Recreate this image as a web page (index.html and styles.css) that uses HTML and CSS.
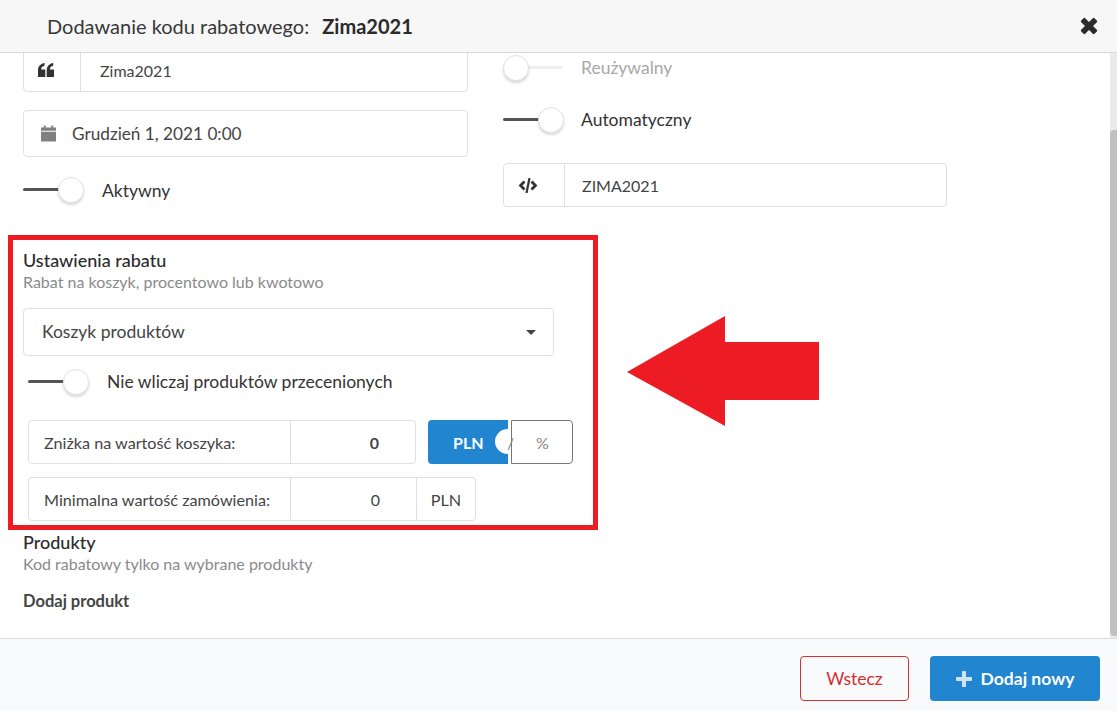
FILE: index.html
```html
<!DOCTYPE html>
<html lang="pl">
<head>
<meta charset="utf-8">
<title>Dodawanie kodu rabatowego</title>
<link rel="stylesheet" href="styles.css">
</head>
<body>
<div class="modal">
  <header class="head">
    <div class="title">Dodawanie kodu rabatowego: <b>Zima2021</b></div>
    <svg class="close" viewBox="0 0 18 18"><path d="M5.200 1.200 9 5l3.800-3.800a1.200 1.200 0 0 1 1.700 0l2.300 2.300a1.200 1.200 0 0 1 0 1.700L13 9l3.800 3.800a1.200 1.200 0 0 1 0 1.700l-2.300 2.300a1.200 1.200 0 0 1-1.700 0L9 13l-3.800 3.800a1.200 1.200 0 0 1-1.700 0l-2.300-2.300a1.200 1.200 0 0 1 0-1.700L5 9 1.200 5.200a1.200 1.200 0 0 1 0-1.700l2.300-2.300a1.200 1.200 0 0 1 1.700 0z"/></svg>
  </header>
  <main class="body">
    <div class="scroll">
      <div class="cols">
        <div class="col-left">
          <div class="field name">
            <span class="addon">
              <svg class="quote" viewBox="0 0 16 14"><path d="M7.300 14H0V7.500C0 3.500 2.300.7 6.500 0v2.800C4.300 3.300 3.200 4.600 3.200 6.500h4.100zM16 14H8.700V7.500c0-4 2.300-6.800 6.500-7.500v2.800c-2.200.5-3.300 1.800-3.300 3.700H16z"/></svg>
            </span>
            <span class="value small">Zima2021</span>
          </div>
          <div class="field date">
            <svg class="cal" viewBox="0 0 16 17"><path d="M3 0h2v2h6V0h2v2h3v3.500H0V2h3zM0 6.500h16V17H0z"/></svg>
            <span>Grudzień 1, 2021 0:00</span>
          </div>
          <div class="toggle-row active">
            <span class="toggle on"><i></i></span>
            <span class="label">Aktywny</span>
          </div>
        </div>
        <div class="col-right">
          <div class="toggle-row reuse">
            <span class="toggle off"><i></i></span>
            <span class="label muted">Reużywalny</span>
          </div>
          <div class="toggle-row auto">
            <span class="toggle on"><i></i></span>
            <span class="label">Automatyczny</span>
          </div>
          <div class="field code">
            <span class="addon">
              <svg class="codeicon" viewBox="0 0 20 15"><path d="M6.500 3.500 2.500 7.500l4 4M13.500 3.500l4 4-4 4" fill="none" stroke="#333" stroke-width="2.800"/><path d="M11.500 0 8.500 15" fill="none" stroke="#333" stroke-width="2.200"/></svg>
            </span>
            <span class="value small">ZIMA2021</span>
          </div>
        </div>
      </div>

      <section class="discount">
        <h3>Ustawienia rabatu</h3>
        <p class="sub">Rabat na koszyk, procentowo lub kwotowo</p>
        <div class="field select">
          <span class="select-text">Koszyk produktów</span>
          <span class="caret"></span>
        </div>
        <div class="toggle-row exclude">
          <span class="toggle on"><i></i></span>
          <span class="label">Nie wliczaj produktów przecenionych</span>
        </div>
        <div class="amount">
          <div class="field cells w388">
            <span class="cell-label">Zniżka na wartość koszyka:</span>
            <span class="cell-num bold">0</span>
          </div>
          <div class="switch">
            <span class="sw-on">PLN<i></i></span>
            <span class="sw-off"><em>/</em><span>%</span></span>
          </div>
        </div>
        <div class="field cells w448">
          <span class="cell-label">Minimalna wartość zamówienia:</span>
          <span class="cell-num">0</span>
          <span class="cell-unit">PLN</span>
        </div>
      </section>

      <section class="products">
        <h3>Produkty</h3>
        <p class="sub">Kod rabatowy tylko na wybrane produkty</p>
        <h4>Dodaj produkt</h4>
      </section>
    </div>
    <div class="track"><div class="thumb"></div></div>
  </main>
  <footer class="foot">
    <button class="btn back">Wstecz</button>
    <button class="btn add">
      <svg class="plus" viewBox="0 0 16 16"><path d="M6 1a1 1 0 0 1 1-1h2a1 1 0 0 1 1 1v5h5a1 1 0 0 1 1 1v2a1 1 0 0 1-1 1h-5v5a1 1 0 0 1-1 1H7a1 1 0 0 1-1-1v-5H1a1 1 0 0 1-1-1V7a1 1 0 0 1 1-1h5z"/></svg>
      Dodaj nowy
    </button>
  </footer>
</div>

<div class="frame"></div>
<svg class="arrow" viewBox="0 0 192 110"><polygon points="0,56 98,0 98,26 192,26 192,84 98,84 98,110"/></svg>
</body>
</html>
```
FILE: styles.css
```css
* { box-sizing: border-box; }
html, body { margin: 0; height: 100%; }
body {
  font-family: Lato, "Open Sans", sans-serif;
  color: #333;
  background: #fff;
  overflow: hidden;
}
.modal { height: 711px; display: flex; flex-direction: column; }

.head {
  flex: none;
  height: 53px;
  background: #f7f7f7;
  border-bottom: 1px solid #d9d9d9;
  display: flex;
  align-items: center;
  justify-content: space-between;
  padding: 0 19px 0 47px;
}
.title { font-size: 20px; color: #383838; }
.title b { margin-left: 8px; color: #2a2a2a; font-weight: 700; }
.close { width: 18px; height: 18px; fill: #2b2b2b; }

.body { flex: 1; min-height: 0; overflow: hidden; position: relative; }
.scroll { margin-top: -8px; padding-left: 23px; }
.cols { display: flex; gap: 35px; height: 190px; }
.col-left { width: 445px; }
.col-right { width: 444px; }

.field {
  display: flex;
  align-items: center;
  border: 1px solid #e0e0e0;
  border-radius: 4px;
  background: #fff;
  font-size: 17.500px;
  color: #444;
}
.addon {
  flex: none;
  display: flex;
  align-items: center;
  justify-content: center;
  align-self: stretch;
  border-right: 1px solid #e0e0e0;
}
.value.small { font-size: 16px; }

.name { height: 47px; margin-bottom: 18px; padding-top: 3px; }
.name .addon { width: 57px; padding-right: 13px; margin-top: -3px; padding-top: 3px; }
.name .value { padding-left: 19px; }
.quote { width: 16px; height: 14px; fill: #333; }

.date { height: 47px; padding-left: 17px; gap: 16px; }
.date span { font-size: 17.200px; }
.cal { width: 15px; height: 17px; fill: #808080; }

.toggle-row { display: flex; align-items: center; font-size: 17.500px; }
.toggle { position: relative; display: block; width: 62px; height: 26px; flex: none; }
.toggle::before {
  content: "";
  position: absolute;
  left: 0;
  top: 11px;
  width: 60px;
  height: 3px;
  border-radius: 2px;
  background: #555;
}
.toggle i {
  position: absolute;
  top: 0;
  left: 35px;
  width: 26px;
  height: 26px;
  border-radius: 50%;
  background: #fff;
  border: 1px solid #e4e4e4;
  box-shadow: 0 2px 3px rgba(0,0,0,.16);
}
.toggle.off::before { background: #eee; }
.toggle.off i { left: 0; }
.label { margin-left: 16px; padding-bottom: 2px; color: #333; }
.label.muted { color: #a8a8a8; }

.active { margin-top: 20px; }
.active .label { margin-left: 17px; padding-bottom: 0; }
.reuse { margin-top: 10px; }
.auto { margin-top: 26px; }
.code { height: 44px; margin-top: 30px; }
.code .addon { width: 61px; padding-right: 13px; }
.code .value { padding-left: 17px; }
.codeicon { width: 20px; height: 15px; }

.discount { padding-top: 15px; }
h3 { margin: 0; font-size: 18px; font-weight: 500; line-height: 20px; color: #2b2b2b; }
.sub { margin: 2px 0 0; font-size: 16px; line-height: 20px; color: #8a8a8a; }
.select {
  width: 531px;
  height: 48px;
  margin-top: 16px;
  padding: 0 17px 0 18px;
  justify-content: space-between;
}
.select-text { padding-bottom: 2px; }
.caret {
  width: 0;
  height: 0;
  border-left: 5px solid transparent;
  border-right: 5px solid transparent;
  border-top: 5px solid #444;
}
.exclude { margin-top: 13px; margin-left: 5px; }
.exclude .label { margin-left: 17px; }
.amount { display: flex; margin-top: 25px; margin-left: 5px; gap: 12px; }
.cells { height: 44px; font-size: 16.200px; flex: none; }
.w388 { width: 388px; }
.w448 { width: 448px; margin: 13px 0 0 5px; }
.cell-label { width: 262px; padding-left: 15px; align-self: stretch; display: flex; align-items: center; border-right: 1px solid #e0e0e0; }
.cell-num { flex: 1; padding-right: 36px; text-align: right; font-size: 16px; }
.cell-num.bold { font-weight: 700; }
.cell-unit { width: 59px; align-self: stretch; display: flex; align-items: center; justify-content: center; border-left: 1px solid #e0e0e0; }

.switch { display: flex; flex: none; height: 44px; width: 145px; font-size: 16px; }
.sw-on {
  position: relative;
  width: 80px;
  background: #2185d0;
  color: #fff;
  font-weight: 700;
  border-radius: 4px 0 0 4px;
  display: flex;
  align-items: center;
  padding-left: 25px;
  overflow: hidden;
}
.sw-on i {
  position: absolute;
  right: -12px;
  top: 9px;
  width: 25px;
  height: 25px;
  border-radius: 50%;
  background: #fff;
}
.sw-off {
  margin-left: 3px;
  flex: 1;
  border: 1px solid #777;
  border-radius: 0 4px 4px 0;
  display: flex;
  align-items: center;
  color: #888;
  position: relative;
  padding-left: 24px;
}
.sw-off em { position: absolute; left: -5px; font-style: normal; color: #888; }

.products { margin-top: 10px; }
.products h3 { line-height: 22px; }
.products .sub { margin-top: 1px; }
h4 { margin: 17px 0 0; font-size: 16.500px; font-weight: 700; color: #444; line-height: 20px; }

.track {
  position: absolute;
  right: 0;
  top: 0;
  bottom: 0;
  width: 7px;
  background: #eaeaea;
  padding: 77px 0 2px;
}
.thumb {
  height: 100%;
  background: #c1c1c1;
  border-radius: 4px 0 0 4px;
}

.foot {
  flex: none;
  height: 73px;
  background: #f9fafb;
  border-top: 1px solid #d9d9d9;
  display: flex;
  justify-content: flex-end;
  gap: 21px;
  padding: 17px 17px 0 0;
}
.btn {
  height: 45px;
  border-radius: 4px;
  font-family: inherit;
  font-size: 17.500px;
  display: flex;
  align-items: center;
  justify-content: center;
}
.back { width: 109px; background: transparent; border: 1px solid #d32f2f; color: #d32f2f; }
.add { width: 170px; background: #2185d0; border: 0; color: #fff; font-weight: 700; gap: 9px; }
.plus { width: 16px; height: 16px; fill: #cfe3f4; }

.frame {
  position: absolute;
  left: 8px;
  top: 235px;
  width: 590px;
  height: 295px;
  border: 5px solid #ed1c24;
}
.arrow {
  position: absolute;
  left: 627px;
  top: 316px;
  width: 192px;
  height: 110px;
  fill: #ed1c24;
}
```
